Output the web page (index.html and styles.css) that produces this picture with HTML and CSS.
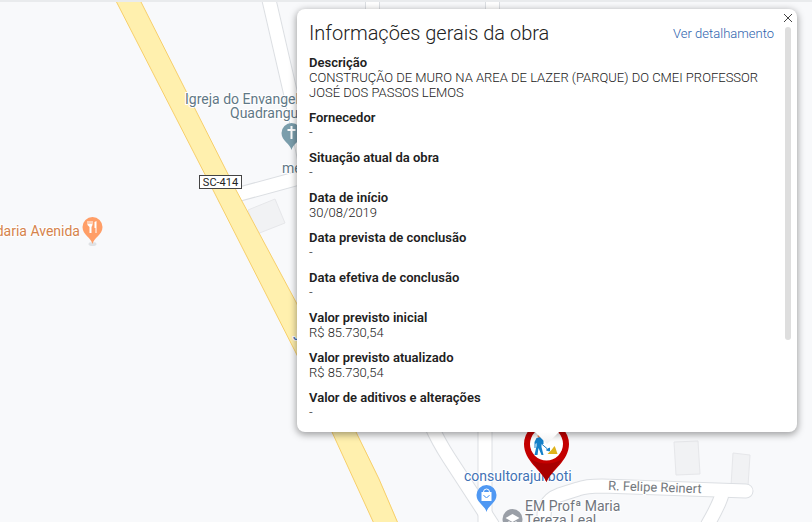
FILE: index.html
```html
<!DOCTYPE html>
<html lang="pt-BR">
<head>
<meta charset="utf-8">
<meta name="viewport" content="width=device-width, initial-scale=1">
<title>Mapa de obras</title>
<link rel="stylesheet" href="styles.css">
</head>
<body>
<main class="map">
  <svg class="canvas" role="img" aria-label="Mapa">
    <!-- buildings -->
    <g class="building">
      <path d="M248 210 275 199 285 223 257 234Z"/>
      <path d="M674 442 698 441 700 474 676 475Z"/>
      <path d="M733 453 750 455 748 486 731 486Z"/>
    </g>
    <!-- local streets: casing, then fill -->
    <g class="street casing">
      <path d="M269 0 290 91 306 166"/>
      <path d="M225 198 310 175"/>
      <path d="M372.500 0V12M492.500 0V12"/>
      <path d="M485 425V530"/>
      <path d="M431 425Q438 441 449 458L492 524"/>
      <path d="M545 525Q540 502 559 495L578 489Q586 486 602 486L746 491"/>
      <path d="M722 494Q720 503 708 524"/>
    </g>
    <g class="street">
      <path d="M269 0 290 91 306 166"/>
      <path d="M225 198 310 175"/>
      <path d="M372.500 0V12M492.500 0V12"/>
      <path d="M485 425V530"/>
      <path d="M431 425Q438 441 449 458L492 524"/>
      <path d="M545 525Q540 502 559 495L578 489Q586 486 602 486L746 491"/>
      <path d="M722 494Q720 503 708 524"/>
    </g>
    <!-- SC-414 highway -->
    <path class="highway" d="M115.500 0 213 190 297 355Q318 398 332 432L376 528H400Q380 478 356 432L297 304 236 190 140 0Z"/>
    <path class="edge" d="M0 1H812"/>
    <g class="shield">
      <rect x="199.500" y="175.500" width="42" height="13"/>
      <text x="220.500" y="186" text-anchor="middle">SC-414</text>
    </g>
    <g class="label church">
      <text x="185" y="104">Igreja do Envangel</text>
      <text x="230" y="118">Quadrangu</text>
      <text x="282" y="173">me</text>
    </g>
    <text class="label food" x="80" y="236" text-anchor="end">daria Avenida</text>
    <text class="label shop" x="293" y="340">J</text>
    <text class="label shop" x="464" y="481">consultorajuliboti</text>
    <text class="label school" x="525" y="511">EM Profª Maria</text>
    <text class="label school" x="525" y="525">Tereza Leal</text>
    <text class="label road" x="608" y="490" transform="rotate(2 608 490)">R. Felipe Reinert</text>
    <!-- points of interest -->
    <g transform="translate(291.500 150)">
      <path class="pin church-pin" d="M0 0C-1-6-10-9-10-17A10 10 0 0 1 10-17C10-9 1-6 0 0Z"/>
      <path class="glyph" d="M0-24V-11M-4-20H4"/>
    </g>
    <g transform="translate(92.500 244)">
      <ellipse class="ground" rx="4" ry="2"/>
      <path class="pin food-pin" d="M0 0C-1-6-10-9-10-17A10 10 0 0 1 10-17C10-9 1-6 0 0Z"/>
      <path class="fork-head" d="M-5-23H-4V-20H-3V-23H-2V-20H-1V-23H0V-19L-1-17V-11H-3V-17L-5-19Z"/>
      <path class="fork-head" d="M2-22 4-23V-11H3V-16H2Z"/>
    </g>
    <g transform="translate(486.500 512)">
      <path class="pin shop-pin" d="M0 0C-1-6-10-9-10-17A10 10 0 0 1 10-17C10-9 1-6 0 0Z"/>
      <path class="solid" d="M-5-20H5V-11H-5Z"/>
      <path class="bag" d="M-3-19V-20A3 3 0 0 1 3-20V-19"/>
      <path class="smile" d="M-3-17Q0-12 3-17"/>
    </g>
    <g transform="translate(512.500 519)">
      <circle class="school-pin" r="10"/>
      <path class="solid" d="M-7-1 0-5 7-1 0 3ZM-4 2V5Q0 8 4 5V2L0 4Z"/>
    </g>
    <!-- selected public work -->
    <g transform="translate(546.500 482)">
      <path class="work-pin" d="M0 0C-5-12-22.500-21-22.500-38A22.500 22.500 0 0 1 22.500-38C22.500-21 5-12 0 0Z"/>
      <path class="work-shade" d="M0 0C-3-8-10-14-16-23Q0-14 16-23C10-14 3-8 0 0Z"/>
      <circle class="solid" cy="-38" r="16.500"/>
      <circle class="helmet" cx="-7" cy="-46" r="2"/>
      <path class="worker" d="M-10-44-6-45-3-42-3-38-5-38-5-35-3-27H-5L-8-34-9-27H-12L-10-36V-39L-11-38V-34H-12V-40Z"/>
      <path class="shovel" d="M-6-39 1-33M0-32 3-34 3-31Z"/>
      <path class="sand" d="M1-28 5-32 8-36 9-34 11-28Z"/>
    </g>
  </svg>

  <section class="info" aria-labelledby="info-title">
    <button class="close" type="button" aria-label="Fechar">
      <svg viewBox="0 0 10 10" aria-hidden="true"><path d="M1 1 9 9M9 1 1 9"/></svg>
    </button>
    <div class="scroll-thumb"></div>
    <header class="info-head">
      <h1 id="info-title">Informações gerais da obra</h1>
      <a href="#detalhamento">Ver detalhamento</a>
    </header>
    <dl class="fields">
      <div><dt>Descrição</dt><dd>CONSTRUÇÃO DE MURO NA AREA DE LAZER (PARQUE) DO CMEI PROFESSOR JOSÉ DOS PASSOS LEMOS</dd></div>
      <div><dt>Fornecedor</dt><dd>-</dd></div>
      <div><dt>Situação atual da obra</dt><dd>-</dd></div>
      <div><dt>Data de início</dt><dd>30/08/2019</dd></div>
      <div><dt>Data prevista de conclusão</dt><dd>-</dd></div>
      <div><dt>Data efetiva de conclusão</dt><dd>-</dd></div>
      <div><dt>Valor previsto inicial</dt><dd>R$ 85.730,54</dd></div>
      <div><dt>Valor previsto atualizado</dt><dd>R$ 85.730,54</dd></div>
      <div><dt>Valor de aditivos e alterações</dt><dd>-</dd></div>
    </dl>
  </section>
</main>
</body>
</html>
```

FILE: styles.css
```css
* { box-sizing: border-box; }

body {
  margin: 0;
  font-family: Roboto, "Liberation Sans", sans-serif;
  color: #212121;
}

.map {
  position: relative;
  display: flow-root;
  min-height: 100vh;
  overflow: hidden;
  background: #f8f9fb;
}

.canvas {
  position: absolute;
  inset: 0;
  width: 100%;
  height: 100%;
}

.building { fill: #f1f2f4; stroke: #e6e7ea; }
.street { fill: none; stroke: #fff; stroke-width: 13px; stroke-linecap: round; stroke-linejoin: round; }
.street.casing { stroke: #dcdfe3; stroke-width: 15px; }
.highway { fill: #fff0ae; stroke: #f7cf6b; }
.edge { stroke: #e9ebed; stroke-width: 2px; }

.shield rect { fill: #fff; stroke: #444; }
.shield text { font-size: 11px; fill: #222; }

.label {
  font-size: 14px;
  paint-order: stroke;
  stroke: #fff;
  stroke-width: 2px;
  stroke-linejoin: round;
}
.church { fill: #5f7886; }
.food { fill: #d5834c; }
.shop { fill: #4272b5; }
.school { fill: #70757d; }
.road { font-size: 13px; fill: #74797e; }

.church-pin { fill: #7b9eac; }
.food-pin { fill: #ff9e67; }
.shop-pin { fill: #4f98f3; }
.school-pin { fill: #9a9fa7; }
.ground { fill: #dfe2e5; }
.solid, .fork-head { fill: #fff; }
.glyph { fill: none; stroke: #fff; stroke-width: 2px; }
.bag { fill: none; stroke: #fff; stroke-width: 1px; }
.smile { fill: none; stroke: #4f98f3; stroke-width: 1px; }

.work-pin { fill: #c40000; }
.work-shade { fill: #a80000; }
.helmet { fill: #ee8650; }
.worker { fill: #1681c9; }
.shovel { fill: #1681c9; stroke: #1681c9; }
.sand { fill: #dfb31c; }

.info {
  position: relative;
  width: 500px;
  max-width: calc(100% - 297px - 15px);
  margin: 9px 0 90px 297px;
  padding: 12px;
  border-radius: 8px;
  background: #fff;
  box-shadow: 0 2px 7px 1px rgba(0, 0, 0, 0.35);
}

/* pointer toward the selected marker */
.info::after {
  content: "";
  position: absolute;
  top: 100%;
  left: 50%;
  width: 24px;
  height: 12px;
  margin-left: -12px;
  background: linear-gradient(#fff, #f1f1f1);
  clip-path: polygon(0 0, 100% 0, 50% 100%);
}

.close {
  position: absolute;
  top: 4px;
  right: 4px;
  width: 10px;
  height: 10px;
  padding: 0;
  border: 0;
  background: none;
}
.close svg { display: block; fill: none; stroke: #444; stroke-width: 1px; }

.scroll-thumb {
  position: absolute;
  top: 18px;
  right: 6px;
  width: 6px;
  height: 74%;
  border-radius: 3px;
  background: #dedede;
}

.info-head {
  display: flex;
  align-items: center;
  justify-content: space-between;
  padding-right: 11px;
}
.info-head h1 {
  margin: 0;
  font-size: 20px;
  font-weight: 300;
  line-height: 24px;
}
.info-head a {
  font-size: 13px;
  font-weight: 300;
  color: #2c62ad;
  text-decoration: none;
}

.fields {
  display: flex;
  flex-direction: column;
  gap: 10px;
  margin: 10px 20px 0 0;
  font-size: 13px;
  line-height: 15px;
}
.fields dt { font-weight: 600; }
.fields dd { margin: 0; font-weight: 300; }
```
